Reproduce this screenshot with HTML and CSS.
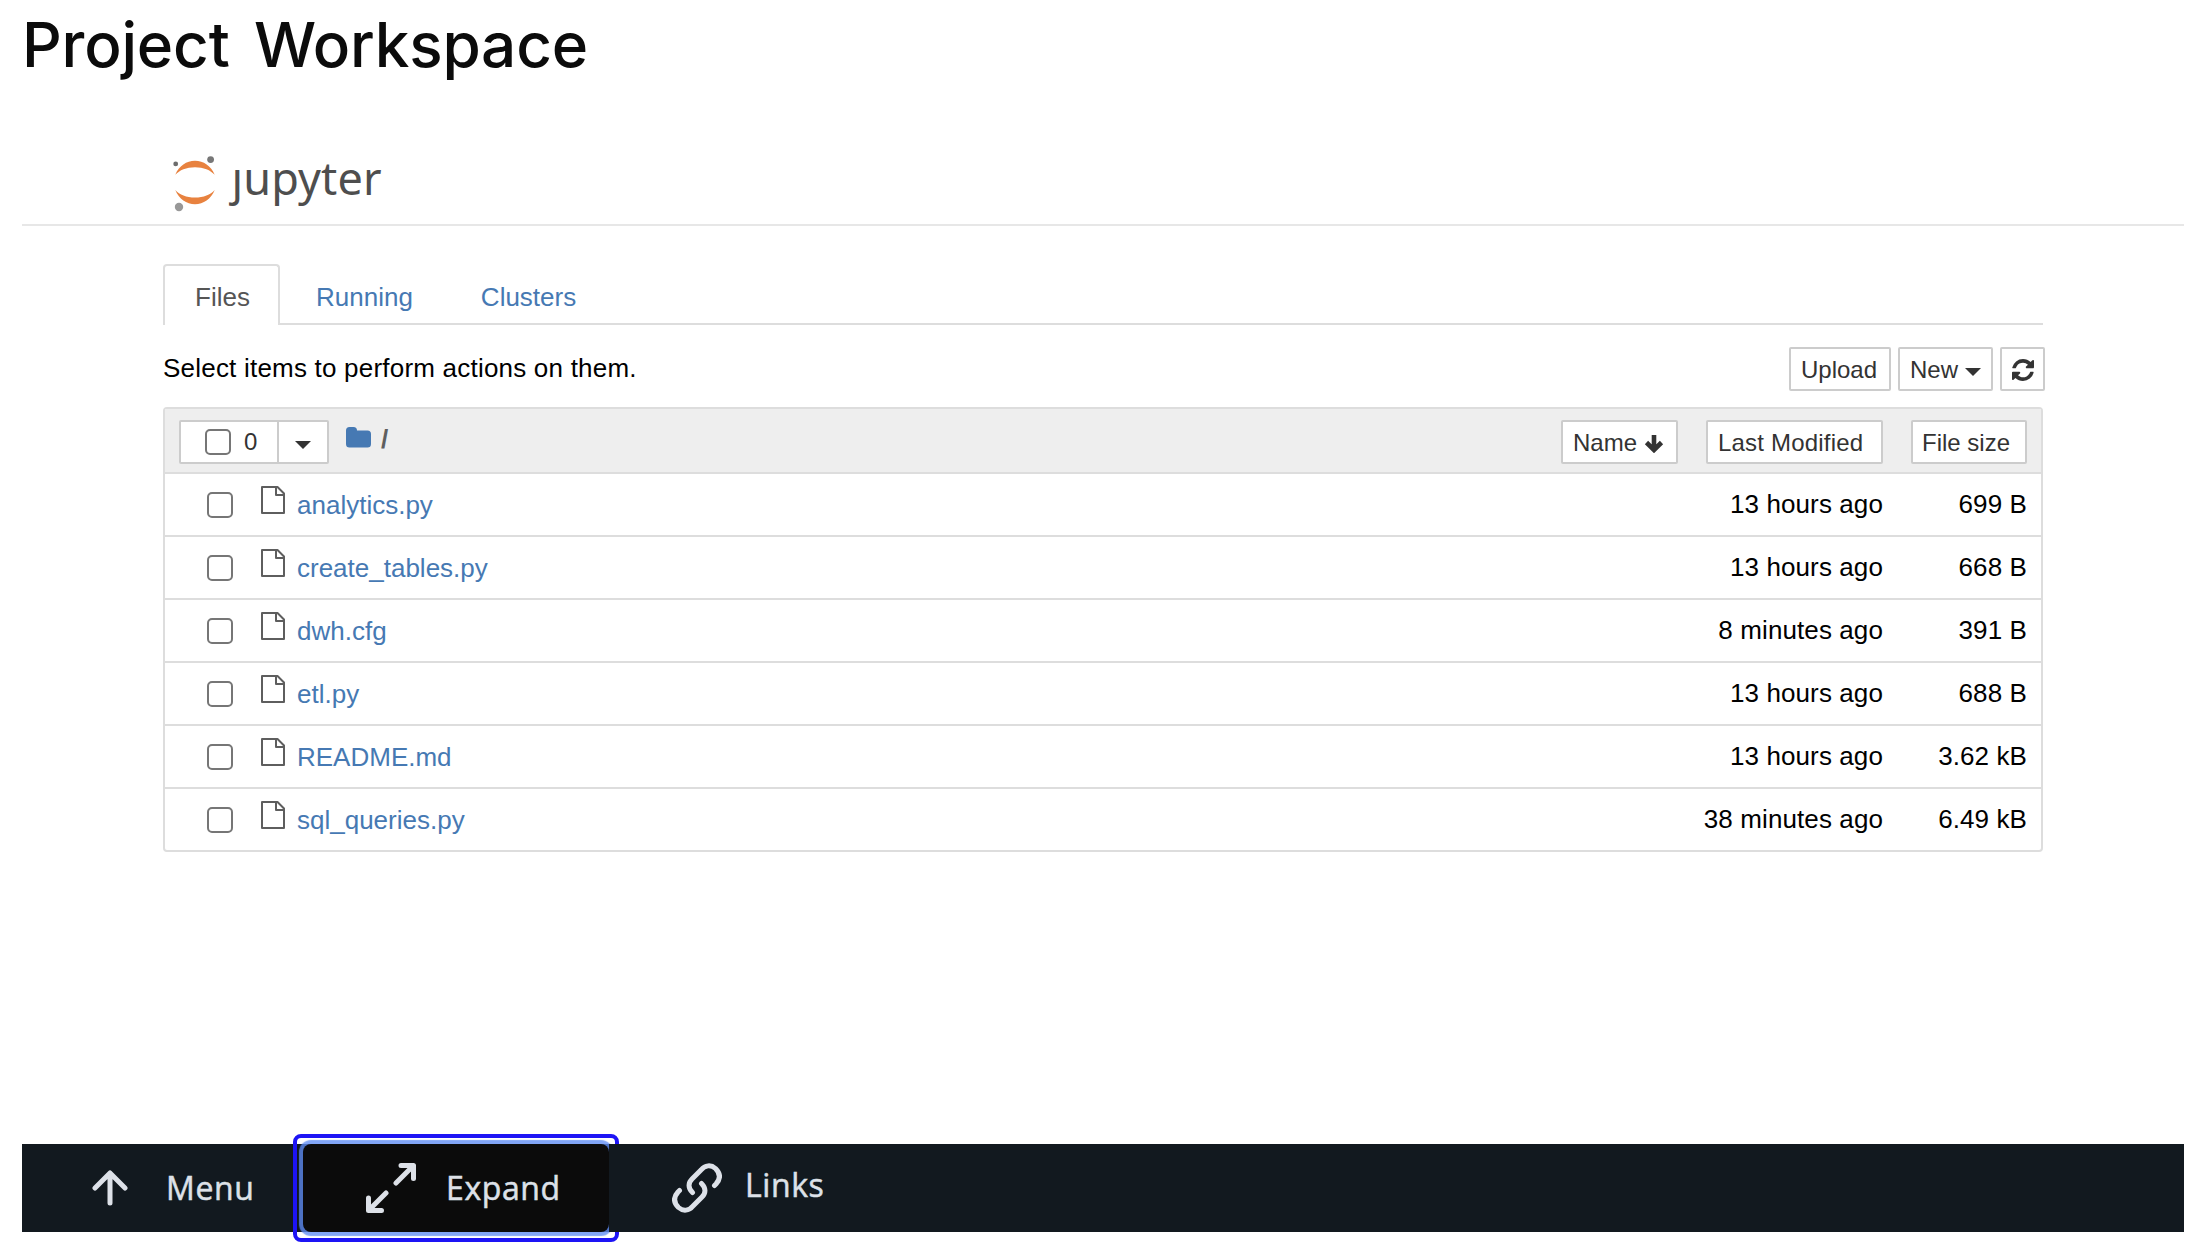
FILE: index.html
```html
<!DOCTYPE html>
<html lang="en">
<head>
<meta charset="utf-8">
<title>Project Workspace</title>
<link rel="stylesheet" href="styles.css">
</head>
<body>
<svg class="defs" aria-hidden="true">
  <symbol id="file" viewBox="0 0 24 28"><path d="M1 1H16.5L23 7.5V27H1ZM15 1V9H23" fill="none" stroke="#5e5e5e" stroke-width="2" stroke-linejoin="round"/></symbol>
  <symbol id="caret" viewBox="0 0 16 8"><path d="M0 0H16L8 8Z" fill="#333"/></symbol>
</svg>
<h1 class="title">Project Workspace</h1>
<main class="workspace">
  <header class="header">
    <svg class="logo" width="225" height="72" viewBox="170 152 225 72" role="img" aria-label="jupyter">
      <g fill="#e8823f">
        <path d="M175.3 174.8C179 166 186.500 160.800 195 160.800S211 166 214.700 174.800C210.500 170 203.500 167.200 195 167.200S179.500 170 175.300 174.800Z"/>
        <path d="M175.3 190C179 199 186.500 204.200 195 204.200S211 199 214.700 190C210.500 194.800 203.500 197.600 195 197.600S179.500 194.800 175.300 190Z"/>
      </g>
      <circle cx="175.700" cy="163.900" r="2.400" fill="#6c6c6c"/>
      <circle cx="210.600" cy="159.600" r="3.400" fill="#777"/>
      <circle cx="179" cy="207" r="4.200" fill="#989898"/>
      <text class="wordmark" x="231.500" y="194.500" textLength="150">ȷupyter</text>
    </svg>
  </header>
  <nav class="tabs">
    <a class="tab active">Files</a>
    <a class="tab running">Running</a>
    <a class="tab">Clusters</a>
  </nav>
  <div class="toolbar">
    <p class="hint">Select items to perform actions on them.</p>
    <button class="btn upload">Upload</button>
    <button class="btn new">New <svg width="16" height="8"><use href="#caret"/></svg></button>
    <button class="btn refresh" aria-label="Refresh"><svg width="22" height="22" viewBox="0 0 1536 1536" fill="#333"><path d="M1511 928q0 5-1 7-64 268-268 434.500T764 1536q-146 0-282.500-55T238 1324l-129 129q-19 19-45 19t-45-19-19-45V960q0-26 19-45t45-19h448q26 0 45 19t19 45-19 45l-137 137q71 66 161 102t187 36q134 0 250-65t186-179q11-17 53-117 8-23 30-23h192q13 0 22.500 9.500t9.500 22.500zm25-800v448q0 26-19 45t-45 19h-448q-26 0-45-19t-19-45 19-45l138-138Q969 256 768 256q-134 0-250 65T332 500q-11 17-53 117-8 23-30 23H50q-13 0-22.500-9.500T18 608v-7q65-268 270-434.500T768 0q146 0 284 55.500T1297 212l130-129q19-19 45-19t45 19 19 45z"/></svg></button>
  </div>
  <section class="list">
    <div class="list-head">
      <div class="select"><span class="select-all"><i class="check"></i>0</span><span class="select-menu"><svg width="16" height="8"><use href="#caret"/></svg></span></div>
      <div class="crumbs"><svg width="25" height="21" viewBox="0 0 25 21"><path d="M3.500 0H7.500Q11 0 11 3.500H21.500Q25 3.500 25 7V17Q25 20.500 21.500 20.500H3.500Q0 20.500 0 17V3.500Q0 0 3.500 0Z" fill="#4679b3"/></svg><span>/</span></div>
      <button class="btn name">Name <svg width="20" height="20" viewBox="0 0 20 20"><path d="M10 2V16M2.500 9.500L10 17L17.500 9.500" fill="none" stroke="#333" stroke-width="4.600"/></svg></button>
      <button class="btn modified">Last Modified</button>
      <button class="btn size">File size</button>
    </div>
    <div class="row"><i class="check"></i><svg class="file"><use href="#file"/></svg><a>analytics.py</a><span class="date">13 hours ago</span><span class="bytes">699 B</span></div>
    <div class="row"><i class="check"></i><svg class="file"><use href="#file"/></svg><a>create_tables.py</a><span class="date">13 hours ago</span><span class="bytes">668 B</span></div>
    <div class="row"><i class="check"></i><svg class="file"><use href="#file"/></svg><a>dwh.cfg</a><span class="date">8 minutes ago</span><span class="bytes">391 B</span></div>
    <div class="row"><i class="check"></i><svg class="file"><use href="#file"/></svg><a>etl.py</a><span class="date">13 hours ago</span><span class="bytes">688 B</span></div>
    <div class="row"><i class="check"></i><svg class="file"><use href="#file"/></svg><a>README.md</a><span class="date">13 hours ago</span><span class="bytes">3.62 kB</span></div>
    <div class="row"><i class="check"></i><svg class="file"><use href="#file"/></svg><a>sql_queries.py</a><span class="date">38 minutes ago</span><span class="bytes">6.49 kB</span></div>
  </section>
</main>
<footer class="bar">
  <div class="action menu"><svg width="36" height="36" viewBox="0 0 36 36"><path d="M18 33V3M3 18L18 3L33 18"/></svg><span>Menu</span></div>
  <div class="action expand"><svg width="50" height="50" viewBox="0 0 50 50"><path d="M30 20L47 3M35 2.500H47.500V15.500M20 30L3 47M2.500 35V47.500H15.500"/></svg><span>Expand</span></div>
  <div class="action links"><svg width="50" height="50" viewBox="0 0 50 50"><path d="M20.500 29.500C16 25 16 20 20 16L29 7C33 2 39 1.500 43.500 5.500C48.500 10.500 48.500 16 44 21L42.500 22.500M29.500 20.500C34 25 34 30 30 34L21 43C17 48 11 48.500 6.500 44.500C1.500 39.500 1.500 34 6 29L7.500 27.500"/></svg><span>Links</span></div>
</footer>
</body>
</html>
```
FILE: styles.css
```css
* { box-sizing: border-box; }
body {
  margin: 0;
  height: 1248px;
  padding: 0 14px 16px 22px;
  display: flex;
  flex-direction: column;
  overflow: hidden;
  background: #fff;
  color: #000;
  font: 26px/36px "Liberation Sans", Arial, sans-serif;
}
.defs { display: none; }
svg { flex: none; display: block; }
.title {
  margin: 0;
  height: 152px;
  padding-top: 5px;
  font: 500 62px/80px Inter, sans-serif;
  letter-spacing: -0.2px;
  word-spacing: 8px;
  color: #0b0b0b;
}
.workspace { flex: 1; }
.header {
  height: 74px;
  padding-left: 148px;
  border-bottom: 2px solid #e7e7e7;
}
.logo { overflow: visible; }
.wordmark { font: 45px "Noto Sans", sans-serif; fill: #4e4e4e; }
.tabs {
  display: flex;
  height: 61px;
  margin: 38px 141px 0;
  box-shadow: inset 0 -2px #ddd;
}
.tab {
  height: 61px;
  padding: 15px 32px 0 34px;
  color: #4679b3;
}
.tab.active {
  width: 117px;
  margin-right: 2px;
  padding: 13px 0 0 30px;
  border: 2px solid #ddd;
  border-bottom: 0;
  border-radius: 4px 4px 0 0;
  background: #fff;
  color: #555;
}
.tab.running { padding-right: 34px; }
.toolbar {
  display: flex;
  margin: 22px 139px 0 141px;
  height: 60px;
}
.hint { flex: 1; margin: 3px 0 0; letter-spacing: 0.21px; }
.btn {
  display: flex;
  align-items: center;
  height: 44px;
  padding: 1px 0 0 10px;
  border: 2px solid #ccc;
  border-radius: 2px;
  background: #fff;
  color: #333;
  font: 24px/36px "Liberation Sans", Arial, sans-serif;
}
.btn svg { margin-left: 7px; }
.upload { width: 102px; margin-right: 7px; }
.new { width: 95px; margin-right: 7px; }
.new svg { margin-top: 4px; }
.refresh { width: 45px; }
.refresh svg { margin-left: 0; }
.list {
  width: 1880px;
  margin-left: 141px;
  border: 2px solid #ddd;
  border-radius: 4px;
}
.list-head {
  display: flex;
  height: 63px;
  padding: 11px 14px 0;
  background: #eee;
}
.select {
  display: flex;
  width: 150px;
  height: 44px;
  border: 2px solid #ccc;
  border-radius: 2px;
  background: #fff;
  color: #333;
  font-size: 24px;
}
.select-all {
  display: flex;
  align-items: center;
  gap: 13px;
  width: 98px;
  padding-left: 24px;
  border-right: 2px solid #ccc;
}
.select-menu { padding: 19px 0 0 16px; }
.check {
  width: 26px;
  height: 26px;
  flex: none;
  border: 2px solid #767676;
  border-radius: 5px;
  background: #fff;
}
.crumbs {
  display: flex;
  flex: 1;
  gap: 10px;
  padding: 7px 0 0 17px;
  color: #5e5e5e;
}
.crumbs span { line-height: 24px; font-weight: bold; }
.name { width: 117px; margin-right: 28px; }
.modified { width: 177px; margin-right: 28px; letter-spacing: 0.2px; }
.size { width: 116px; padding-left: 9px; }
.row {
  display: flex;
  height: 63px;
  padding: 18px 14px 0 42px;
  border-top: 2px solid #ddd;
}
.file { width: 24px; height: 28px; margin: -6px 12px 0 28px; }
.row a { flex: 1; color: #4679b3; margin-top: -5px; }
.date, .bytes { margin-top: -6px; text-align: right; letter-spacing: 0.1px; }
.bytes { width: 144px; }
.bar {
  display: flex;
  height: 88px;
  background: #12191f;
  color: #dde1e8;
  font: 500 32px/44px "Open Sans", sans-serif;
  letter-spacing: 0.6px;
}
.action { display: flex; }
.action span { -webkit-text-stroke: 0.5px #dde1e8; }
.action svg {
  fill: none;
  stroke: #dde1e8;
  stroke-width: 5;
  stroke-linecap: round;
  stroke-linejoin: round;
}
.menu { width: 281px; padding: 22px 0 0 70px; }
.menu svg { margin: 4px 38px 0 0; }
.expand {
  position: relative;
  width: 306px;
  padding: 19px 0 0 63px;
  border-radius: 8px;
  background: #0b0b0b;
  box-shadow: 0 0 1px 4px rgba(94, 140, 244, 0.78);
}
/* focus ring */
.expand::after {
  content: "";
  position: absolute;
  inset: -10px;
  border: 4px solid #1d14f5;
  border-radius: 8px;
}
.expand svg { margin-right: 30px; }
.expand span { margin-top: 3px; }
.links {
  position: relative;
  flex: 1;
  padding: 19px 0 0 63px;
  background: #12191f;
}
.links svg { margin-right: 23px; }
```
